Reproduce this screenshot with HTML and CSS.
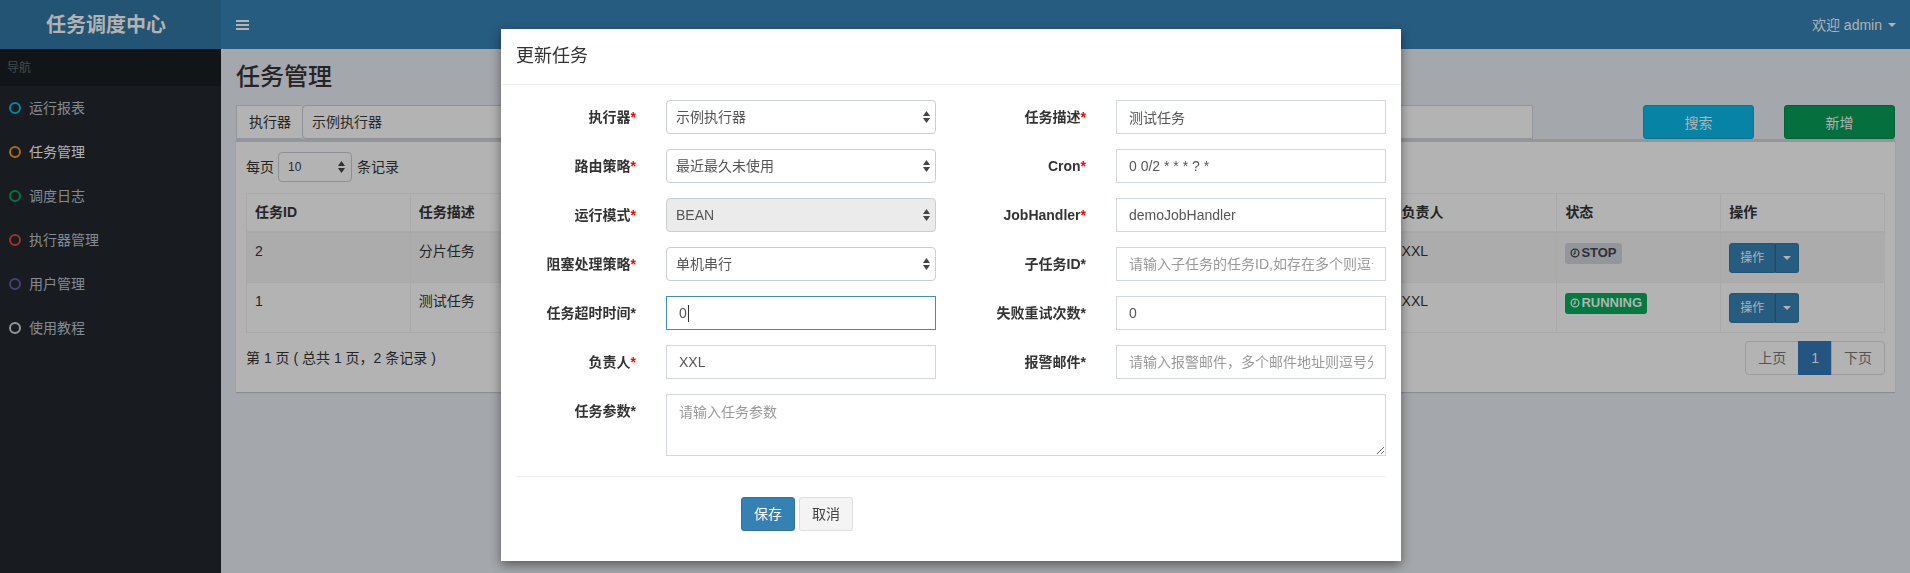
FILE: index.html
```html
<!DOCTYPE html>
<html lang="zh-CN">
<head>
<meta charset="utf-8">
<title>任务调度中心</title>
<link rel="stylesheet" href="styles.css">
</head>
<body>
<div class="page">
  <header class="main-header">
    <div class="logo">任务调度中心</div>
    <nav class="navbar">
      <span class="toggle"><svg width="13" height="10" viewBox="0 0 13 10"><rect x="0" y="0" width="13" height="2"/><rect x="0" y="4" width="13" height="2"/><rect x="0" y="8" width="13" height="2"/></svg></span>
      <span class="user">欢迎 admin <span class="caret"></span></span>
    </nav>
  </header>
  <div class="main">
    <aside class="sidebar">
      <div class="nav-header">导航</div>
      <ul class="menu">
        <li><i class="ring aqua"></i><span>运行报表</span></li>
        <li class="active"><i class="ring yellow"></i><span>任务管理</span></li>
        <li><i class="ring green"></i><span>调度日志</span></li>
        <li><i class="ring red"></i><span>执行器管理</span></li>
        <li><i class="ring purple"></i><span>用户管理</span></li>
        <li><i class="ring gray"></i><span>使用教程</span></li>
      </ul>
    </aside>
    <section class="content">
      <h1 class="page-title">任务管理</h1>
      <div class="filters">
        <div class="input-group">
          <span class="addon">执行器</span>
          <div class="select group-select"><span>示例执行器</span><svg class="arrows" width="7" height="12" viewBox="0 0 7 12"><polygon points="0,5 3.5,0 7,5"/><polygon points="0,7 7,7 3.5,12"/></svg></div>
        </div>
        <div class="finput w-desc"></div>
        <div class="finput w-handler"></div>
        <input class="finput w-owner" placeholder="请输入负责人">
        <button class="btn btn-info">搜索</button>
        <button class="btn btn-success">新增</button>
      </div>
      <div class="box">
        <div class="length-row">
          <span>每页</span>
          <div class="select small-select"><span>10</span><svg class="arrows" width="7" height="12" viewBox="0 0 7 12"><polygon points="0,5 3.5,0 7,5"/><polygon points="0,7 7,7 3.5,12"/></svg></div>
          <span>条记录</span>
        </div>
        <table class="table">
          <thead>
            <tr><th>任务ID</th><th>任务描述</th><th></th><th></th><th></th><th></th><th></th><th>负责人</th><th>状态</th><th>操作</th></tr>
          </thead>
          <tbody>
            <tr>
              <td>2</td><td>分片任务</td><td></td><td></td><td></td><td></td><td></td><td>XXL</td>
              <td><span class="label label-stop"><svg class="clock" width="10" height="10" viewBox="0 0 10 10"><circle cx="5" cy="5" r="3.9"/><path d="M5 2.4V5.2L3.4 6.6"/></svg>STOP</span></td>
              <td><span class="btn-group"><span class="op">操作</span><span class="op-caret"><span class="caret"></span></span></span></td>
            </tr>
            <tr>
              <td>1</td><td>测试任务</td><td></td><td></td><td></td><td></td><td></td><td>XXL</td>
              <td><span class="label label-run"><svg class="clock" width="10" height="10" viewBox="0 0 10 10"><circle cx="5" cy="5" r="3.9"/><path d="M5 2.4V5.2L3.4 6.6"/></svg>RUNNING</span></td>
              <td><span class="btn-group"><span class="op">操作</span><span class="op-caret"><span class="caret"></span></span></span></td>
            </tr>
          </tbody>
        </table>
        <div class="info-row">
          <span>第 1 页 ( 总共 1 页，2 条记录 )</span>
          <ul class="pagination">
            <li>上页</li>
            <li class="active">1</li>
            <li>下页</li>
          </ul>
        </div>
      </div>
    </section>
  </div>
</div>

<div class="modal">
  <div class="modal-header">更新任务</div>
  <div class="modal-body">
    <div class="form-grid">
      <label>执行器<span class="req">*</span></label>
      <div class="cell"><div class="select"><span>示例执行器</span><svg class="arrows" width="7" height="12" viewBox="0 0 7 12"><polygon points="0,5 3.5,0 7,5"/><polygon points="0,7 7,7 3.5,12"/></svg></div></div>
      <label>任务描述<span class="req">*</span></label>
      <div class="cell"><input class="input" value="测试任务"></div>

      <label>路由策略<span class="req">*</span></label>
      <div class="cell"><div class="select"><span>最近最久未使用</span><svg class="arrows" width="7" height="12" viewBox="0 0 7 12"><polygon points="0,5 3.5,0 7,5"/><polygon points="0,7 7,7 3.5,12"/></svg></div></div>
      <label>Cron<span class="req">*</span></label>
      <div class="cell"><input class="input" value="0 0/2 * * * ? *"></div>

      <label>运行模式<span class="req">*</span></label>
      <div class="cell"><div class="select disabled"><span>BEAN</span><svg class="arrows" width="7" height="12" viewBox="0 0 7 12"><polygon points="0,5 3.5,0 7,5"/><polygon points="0,7 7,7 3.5,12"/></svg></div></div>
      <label>JobHandler<span class="req">*</span></label>
      <div class="cell"><input class="input" value="demoJobHandler"></div>

      <label>阻塞处理策略<span class="req">*</span></label>
      <div class="cell"><div class="select"><span>单机串行</span><svg class="arrows" width="7" height="12" viewBox="0 0 7 12"><polygon points="0,5 3.5,0 7,5"/><polygon points="0,7 7,7 3.5,12"/></svg></div></div>
      <label>子任务ID*</label>
      <div class="cell"><input class="input" placeholder="请输入子任务的任务ID,如存在多个则逗号分隔"></div>

      <label>任务超时时间*</label>
      <div class="cell"><div class="input focused">0<span class="text-caret"></span></div></div>
      <label>失败重试次数*</label>
      <div class="cell"><input class="input" value="0"></div>

      <label>负责人<span class="req">*</span></label>
      <div class="cell"><input class="input" value="XXL"></div>
      <label>报警邮件*</label>
      <div class="cell"><input class="input" placeholder="请输入报警邮件，多个邮件地址则逗号分隔"></div>

      <label>任务参数*</label>
      <div class="cell wide"><textarea class="textarea" placeholder="请输入任务参数"></textarea></div>
    </div>
    <hr class="divider">
    <div class="actions">
      <button class="mbtn mbtn-primary">保存</button>
      <button class="mbtn mbtn-default">取消</button>
    </div>
  </div>
</div>
</body>
</html>
```

FILE: styles.css
```css
/* Page behind the modal is drawn in its dimmed (backdrop) colours. */
* { box-sizing: border-box; }
html, body { margin: 0; padding: 0; }
body {
  width: 1910px;
  height: 573px;
  overflow: hidden;
  font-family: "Liberation Sans", "Noto Sans CJK SC", Arial, sans-serif;
  font-size: 14px;
  line-height: 20px;
  color: #242424;
  background: #a4a7ab;
}
ul { list-style: none; margin: 0; padding: 0; }
button, input, textarea { font-family: inherit; font-size: 14px; }

.page {
  height: 573px;
  display: flex;
  flex-direction: column;
  background: #a4a7ab;
}

/* header */
.main-header { display: flex; height: 49px; flex: none; }
.logo {
  width: 221px;
  background: #245474;
  color: #b3b3b3;
  font-size: 20px;
  font-weight: bold;
  display: flex;
  align-items: center;
  justify-content: center;
  padding-right: 9px;
}
.navbar {
  flex: 1;
  background: #265c80;
  display: flex;
  align-items: center;
  justify-content: space-between;
  padding: 0 14px 0 15px;
  color: #b3b3b3;
}
.toggle { display: flex; }
.toggle svg { fill: #b3b3b3; }
.user { display: flex; align-items: center; font-size: 14px; }
.caret {
  display: inline-block;
  width: 0; height: 0;
  border-top: 4px solid currentColor;
  border-left: 4px solid transparent;
  border-right: 4px solid transparent;
}
.user .caret { margin-left: 6px; }

/* sidebar */
.main { flex: 1; display: flex; }
.sidebar { width: 221px; flex: none; background: #181c20; }
.nav-header {
  height: 37px;
  background: #121518;
  color: #444c53;
  font-size: 12px;
  padding: 9px 7px;
}
.menu li {
  height: 44px;
  display: flex;
  align-items: center;
  padding-left: 9px;
  color: #848c92;
}
.menu li.active { color: #b3b3b3; }
.ring {
  width: 12px; height: 12px;
  border-radius: 50%;
  border: 2px solid;
  margin-right: 8px;
}
.ring.aqua { border-color: #0086a7; }
.ring.yellow { border-color: #aa6d0d; }
.ring.green { border-color: #00743f; }
.ring.red { border-color: #9b3528; }
.ring.purple { border-color: #434076; }
.ring.gray { border-color: #93969b; }

/* content */
.content { flex: 1; padding: 15px 15px 0; }
.page-title {
  margin: 0 0 15px;
  font-size: 24px;
  font-weight: 500;
  line-height: 26px;
  color: #242424;
}
.filters { display: flex; height: 34px; }
.input-group { width: 392px; display: flex; margin-right: 30px; }
.addon {
  width: 66px;
  border: 1px solid #93969b;
  border-right: 0;
  background: #b3b3b3;
  padding: 6px 12px;
  white-space: nowrap;
  color: #242424;
}
.select {
  height: 34px;
  border: 1px solid #c9cdd4;
  border-radius: 4px;
  background: #fff;
  display: flex;
  align-items: center;
  justify-content: space-between;
  padding: 0 5px 0 9px;
  color: #555;
}
.select .arrows { fill: #444; flex: none; }
.select.disabled { background: #ebebeb; }
.filters .select, .box .select {
  border-color: #8d9095;
  background: #b3b3b3;
  color: #2a2a2a;
}
.filters .select .arrows, .box .select .arrows { fill: #303030; }
.group-select { flex: 1; }
.finput {
  height: 34px;
  border: 1px solid #93969b;
  padding: 6px 12px;
  background: #b3b3b3;
  color: #3c3c3c;
}
.w-desc { width: 250px; margin-right: 30px; }
.w-handler { width: 250px; }
.w-owner { width: 234px; margin-left: auto; }
.finput::placeholder { color: #6b6b6b; }
.btn {
  width: 111px;
  height: 34px;
  border: 1px solid transparent;
  border-radius: 3px;
  color: #b3b3b3;
  padding: 0;
}
.btn-info { background: #0783a6; border-color: #067594; margin-left: 110px; }
.btn-success { background: #05703e; border-color: #006335; margin-left: 30px; }

/* box */
.box {
  background: #b3b3b3;
  border-top: 3px solid #93969b;
  box-shadow: 0 1px 1px rgba(0,0,0,0.15);
  padding: 10px 10px 10px;
}
.length-row { display: flex; align-items: center; height: 30px; }
.small-select {
  width: 74px;
  height: 30px;
  margin: 0 5px 0 4px;
  font-size: 12px;
  padding-right: 6px;
}
.table {
  margin-top: 11px;
  width: 100%;
  table-layout: fixed;
  border-collapse: collapse;
  border: 1px solid #a9a9a9;
}
.table th, .table td {
  border: 1px solid #a9a9a9;
  text-align: left;
  vertical-align: top;
  padding: 8px;
  white-space: nowrap;
  overflow: hidden;
}
.table th { border-bottom-width: 2px; padding-bottom: 7px; font-weight: bold; height: 38px; }
.table td { padding-bottom: 9px; height: 48px; }
.table tbody tr:nth-child(odd) td { background: #acacac; }
.label {
  display: inline-flex;
  align-items: center;
  height: 21px;
  padding: 0 5px;
  border-radius: 3px;
  font-size: 13px;
  font-weight: bold;
  margin-top: 2px;
}
.clock { fill: none; stroke: currentColor; stroke-width: 1.3; margin-right: 1px; }
.label-stop { background: #93969d; color: #303030; }
.label-run { background: #037a40; color: #b3b3b3; }
.btn-group { display: inline-flex; height: 30px; margin-top: 2px; }
.op {
  background: #265c80;
  border: 1px solid #245474;
  border-radius: 3px 0 0 3px;
  color: #b3b3b3;
  font-size: 12px;
  padding: 5px 10px;
  line-height: 18px;
}
.op-caret {
  width: 24px;
  background: #265c80;
  border: 1px solid #245474;
  border-left-color: #1d4864;
  border-radius: 0 3px 3px 0;
  color: #b3b3b3;
  display: flex;
  align-items: center;
  justify-content: center;
}
.info-row {
  display: flex;
  align-items: center;
  justify-content: space-between;
  margin-top: 8px;
  margin-bottom: 7px;
}
.pagination { display: flex; }
.pagination li {
  height: 34px;
  padding: 6px 12px;
  border: 1px solid #9b9b9b;
  margin-left: -1px;
  color: #535353;
  background: #b3b3b3;
}
.pagination li:first-child { border-radius: 4px 0 0 4px; }
.pagination li:last-child { border-radius: 0 4px 4px 0; }
.pagination li.active { background: #245580; border-color: #245580; color: #b3b3b3; }

/* modal */
.modal {
  position: fixed;
  left: 501px;
  top: 29px;
  width: 900px;
  background: #fff;
  box-shadow: 0 4px 10px rgba(0,0,0,0.45);
}
.modal-header {
  padding: 15px;
  font-size: 18px;
  line-height: 25px;
  border-bottom: 1px solid #f0f0f0;
  color: #333;
}
.modal-body { padding: 15px 0 30px; }
.form-grid {
  display: grid;
  grid-template-columns: 150px 300px 150px 300px;
  row-gap: 15px;
}
.form-grid label {
  padding: 7px 15px 0;
  text-align: right;
  font-weight: bold;
  white-space: nowrap;
  color: #333;
}
.req { color: #f00; }
.cell { padding: 0 15px; }
.cell.wide { grid-column: 2 / span 3; }
.input {
  display: block;
  width: 100%;
  height: 34px;
  border: 1px solid #d2d6de;
  padding: 6px 12px;
  color: #555;
  background: #fff;
  outline: none;
}
.input::placeholder { color: #999; }
.input.focused { border-color: #3c8dbc; line-height: 20px; display: flex; align-items: center; }
.text-caret {
  display: inline-block;
  width: 1px;
  height: 17px;
  background: #333;
  margin-left: 1px;
}
.textarea {
  display: block;
  width: 100%;
  height: 62px;
  border: 1px solid #d2d6de;
  padding: 6px 12px;
  color: #555;
  resize: vertical;
  outline: none;
}
.textarea::placeholder { color: #999; }
.divider {
  margin: 20px 15px 20px;
  border: 0;
  border-top: 1px solid #eee;
}
.actions { padding-left: 240px; display: flex; gap: 4px; }
.mbtn {
  height: 34px;
  padding: 6px 12px;
  border: 1px solid transparent;
  border-radius: 3px;
  line-height: 20px;
}
.mbtn-primary { background: #3581b4; border-color: #2f72a0; color: #fff; }
.mbtn-default { background: #f4f4f4; border-color: #ddd; color: #444; }
```
